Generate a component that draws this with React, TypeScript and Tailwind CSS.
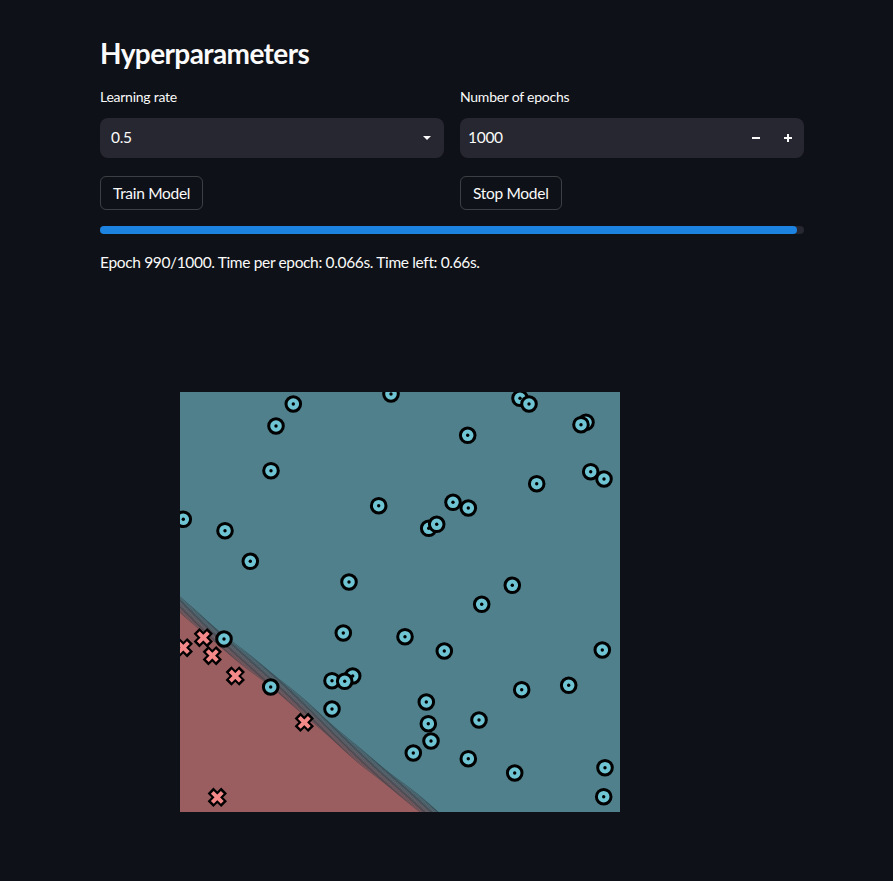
import React from "react";

const circles: [number, number][] = [
  [293.3, 404], [391, 394], [520, 398.3], [529, 404], [276, 426], [467.7, 435.3],
  [586, 422.3], [581, 424.7], [271, 470.7], [590.7, 471.7], [604, 479], [536.7, 483.7],
  [378.7, 505.7], [453, 502.3], [468.3, 508], [428.7, 528.3], [436.7, 524.3],
  [183.3, 519.3], [225, 530.7], [250.3, 561.3], [349, 582], [512.3, 585.3], [481.7, 604.3],
  [224, 639], [343.3, 633], [405, 636.7], [444.3, 651], [602.3, 650], [332, 680.7],
  [352.7, 676], [344.7, 681.3], [270.7, 687], [521.7, 689.7], [568.7, 685.3], [426.3, 702],
  [332, 709], [428.3, 723.7], [479, 720], [431, 741], [413.3, 753], [468.3, 758.7],
  [514.7, 773], [605, 767.7], [603.7, 796.7],
];

const crosses: [number, number][] = [
  [183.3, 647.7], [203.3, 637.7], [212.3, 655.7], [235.3, 676], [304.3, 722.3], [217.3, 797.3],
];

const OX = 180;
const OY = 392;

function edgeY(x: number, off: number) {
  const wig = Math.sin(x / 23) * 1.2 + Math.sin(x / 9 + off) * 0.5;
  return 221 + x * 0.836 - off + wig;
}

function bandPath(off: number) {
  const pts: string[] = [];
  for (let x = -5; x <= 280; x += 5) {
    pts.push(`${x},${edgeY(x, off).toFixed(2)}`);
  }
  return pts;
}

function mix(a: number[], b: number[], t: number) {
  return `rgb(${a.map((v, i) => Math.round(v + (b[i] - v) * t)).join(",")})`;
}

function Chart() {
  const red = [155, 94, 96];
  const blue = [79, 128, 139];
  const steps = 16;
  const bands = [];
  for (let i = steps; i >= 0; i--) {
    const t = i / steps;
    const poly = [...bandPath(i), "300,440", "-5,440"].join(" ");
    bands.push(
      <polygon key={"b" + i} points={poly} fill={mix(red, blue, t * 0.85 + 0.05)} />
    );
  }
  const lines = [];
  for (let i = 1; i <= steps; i++) {
    lines.push(
      <polyline
        key={"l" + i}
        points={bandPath(i).join(" ")}
        fill="none"
        stroke="#26313a"
        strokeOpacity={0.7}
        strokeWidth={0.6}
      />
    );
  }
  return (
    <svg width={440} height={420} viewBox="0 0 440 420" className="block">
      <rect x={0} y={0} width={440} height={420} fill="rgb(79,128,139)" />
      {bands}
      <polygon points={[...bandPath(0), "300,440", "-5,440"].join(" ")} fill="rgb(155,94,96)" />
      {lines}
      {crosses.map(([x, y], i) => {
        const cx = x - OX;
        const cy = y - OY;
        const a = 6.8;
        const b = 5;
        return (
          <g key={"x" + i}>
            <path
              d={`M${cx - a},${cy - a}L${cx + a},${cy + a}M${cx - a},${cy + a}L${cx + a},${cy - a}`}
              stroke="#000"
              strokeWidth={8.2}
              strokeLinecap="butt"
            />
            <path
              d={`M${cx - b},${cy - b}L${cx + b},${cy + b}M${cx - b},${cy + b}L${cx + b},${cy - b}`}
              stroke="#f4898a"
              strokeWidth={4}
              strokeLinecap="butt"
            />
          </g>
        );
      })}
      {circles.map(([x, y], i) => (
        <g key={"c" + i}>
          <circle cx={x - OX} cy={y - OY} r={7.3} fill="#6fc4d3" stroke="#000" strokeWidth={3} />
          <circle cx={x - OX} cy={y - OY} r={1.7} fill="#000" />
        </g>
      ))}
    </svg>
  );
}

export default function App() {
  return (
    <div
      className="min-h-[881px] w-full bg-[#0e1117] text-[#fafafa]"
      style={{ fontFamily: "Lato, 'Noto Sans', sans-serif" }}
    >
      <div className="ml-[100px] w-[704px] pt-[36px]">
        <h2 className="text-[28px] leading-[34px] font-bold tracking-[-0.6px]">Hyperparameters</h2>
        <div className="mt-[17px] grid grid-cols-2 gap-x-[16px]">
          <div>
            <div className="text-[14px] leading-[20px] tracking-[-0.25px]">Learning rate</div>
            <div className="mt-[11px] flex h-[40px] items-center justify-between rounded-[8px] bg-[#262730] pl-[11px] pr-[12px]">
              <span className="text-[15.5px] tracking-[-0.3px]">0.5</span>
              <svg width="10" height="6" viewBox="0 0 10 6">
                <path d="M1 1h8L5 5z" fill="#fafafa" />
              </svg>
            </div>
            <button className="mt-[18px] h-[34px] rounded-[6px] border border-[rgba(250,250,250,0.2)] px-[12px] text-[15.5px] leading-[20px] tracking-[-0.3px]">
              Train Model
            </button>
          </div>
          <div>
            <div className="text-[14px] leading-[20px] tracking-[-0.25px]">Number of epochs</div>
            <div className="mt-[11px] flex h-[40px] items-center justify-between rounded-[8px] bg-[#262730] pl-[8px]">
              <span className="text-[15.5px] tracking-[-0.3px]">1000</span>
              <div className="flex h-full items-center">
                <div className="flex h-full w-[32px] items-center justify-center">
                  <svg width="10" height="10" viewBox="0 0 10 10">
                    <path d="M1 5h8" stroke="#fafafa" strokeWidth="2" />
                  </svg>
                </div>
                <div className="flex h-full w-[32px] items-center justify-center">
                  <svg width="10" height="10" viewBox="0 0 10 10">
                    <path d="M1 5h8M5 1v8" stroke="#fafafa" strokeWidth="2" />
                  </svg>
                </div>
              </div>
            </div>
            <button className="mt-[18px] h-[34px] rounded-[6px] border border-[rgba(250,250,250,0.2)] px-[12px] text-[15.5px] leading-[20px] tracking-[-0.3px]">
              Stop Model
            </button>
          </div>
        </div>
        <div className="mt-[16px] h-[8px] w-full rounded-full bg-[#262730]">
          <div className="h-full w-[99%] rounded-full bg-[#1c83e1]" />
        </div>
        <div className="mt-[16px] text-[15.5px] leading-[24px] tracking-[-0.35px]">
          Epoch 990/1000. Time per epoch: 0.066s. Time left: 0.66s.
        </div>
        <div className="ml-[80px] mt-[118px] pb-[69px]">
          <Chart />
        </div>
      </div>
    </div>
  );
}
